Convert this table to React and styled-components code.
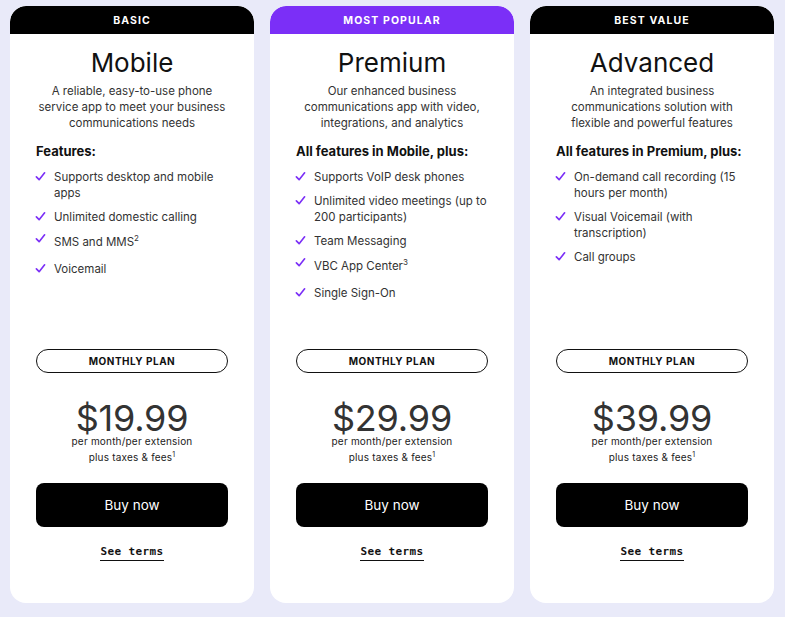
import React from "react";
import styled, { createGlobalStyle } from "styled-components";

const Global = createGlobalStyle`
  html, body { margin: 0; padding: 0; background: #e9eaf9; }
  body { font-family: Inter, "Open Sans", sans-serif; -webkit-font-smoothing: antialiased; }
  * { box-sizing: border-box; }
`;

const Page = styled.div`
  display: grid;
  grid-template-columns: repeat(3, 244px);
  gap: 16px;
  padding: 6px 10px;
  width: 785px;
  height: 617px;
  background: #e9eaf9;
`;

const Card = styled.div`
  display: flex;
  flex-direction: column;
  height: 597px;
  background: #fff;
  border-radius: 16px;
  overflow: hidden;
`;

const Banner = styled.div`
  height: 28px;
  background: ${(p) => (p.$purple ? "#7b2ff7" : "#000")};
  color: #fff;
  display: flex;
  align-items: center;
  justify-content: center;
  font-size: 10.5px;
  font-weight: 700;
  letter-spacing: 1.1px;
  text-transform: uppercase;
  border-radius: 16px 16px 0 0;
`;

const Body = styled.div`
  flex: 1;
  display: flex;
  flex-direction: column;
  padding: 14px 26px 42px;
`;

const Title = styled.h2`
  margin: 0;
  font-size: 26px;
  line-height: 30px;
  font-weight: 400;
  color: #111;
  text-align: center;
`;

const Desc = styled.p`
  margin: 5px -4px 0;
  font-size: 11.5px;
  line-height: 16px;
  color: #333;
  text-align: center;
`;

const FeatHead = styled.h3`
  margin: 11px 0 0;
  font-size: 13px;
  line-height: 18px;
  font-weight: 700;
  color: #111;
`;

const List = styled.ul`
  flex: 1;
  list-style: none;
  margin: 9px 0 0;
  padding: 0;
  display: flex;
  flex-direction: column;
  gap: 8px;
`;

const Item = styled.li`
  display: flex;
  align-items: flex-start;
  gap: 8px;
  font-size: 11.5px;
  line-height: 16px;
  color: #333;
  padding: ${(p) => (p.$sup ? "1px 0 3px" : "0")};
  sup { font-size: 8px; line-height: 0; vertical-align: super; }
`;

const Check = styled.svg`
  flex: none;
  width: 11px;
  height: 11px;
  margin-top: ${(p) => (p.$sup ? "-1px" : "2px")};
  margin-left: -1px;
`;

const Bottom = styled.div`
  display: flex;
  flex-direction: column;
  align-items: center;
`;

const Pill = styled.div`
  width: 192px;
  height: 24px;
  border: 1px solid #111;
  border-radius: 12px;
  display: flex;
  align-items: center;
  justify-content: center;
  font-size: 10px;
  font-weight: 700;
  letter-spacing: 0.5px;
  color: #111;
`;

const Price = styled.div`
  margin-top: 30px;
  font-size: 36px;
  line-height: 30px;
  color: #333;
  letter-spacing: -0.2px;
`;

const Note = styled.div`
  font-size: 10px;
  line-height: 16px;
  color: #222;
  text-align: center;
  letter-spacing: 0.2px;
  sup { font-size: 7px; line-height: 0; }
`;

const Buy = styled.button`
  margin-top: 18px;
  width: 192px;
  height: 44px;
  border: none;
  border-radius: 8px;
  background: #000;
  color: #fff;
  font-family: inherit;
  font-size: 13.5px;
  cursor: pointer;
`;

const Terms = styled.a`
  margin-top: 18px;
  font-family: "DejaVu Sans Mono", "Liberation Mono", monospace;
  font-size: 11px;
  font-weight: 700;
  letter-spacing: 0.4px;
  line-height: 14px;
  color: #111;
  text-decoration: none;
  padding-bottom: 1px;
  border-bottom: 1.5px solid #111;
`;

const plans = [
  {
    label: "Basic",
    title: "Mobile",
    desc: "A reliable, easy-to-use phone service app to meet your business communications needs",
    head: "Features:",
    items: [
      ["Supports desktop and mobile apps"],
      ["Unlimited domestic calling"],
      ["SMS and MMS", "2"],
      ["Voicemail"],
    ],
    price: "$19.99",
  },
  {
    label: "Most Popular",
    purple: true,
    title: "Premium",
    desc: "Our enhanced business communications app with video, integrations, and analytics",
    head: "All features in Mobile, plus:",
    items: [
      ["Supports VoIP desk phones"],
      ["Unlimited video meetings (up to 200 participants)"],
      ["Team Messaging"],
      ["VBC App Center", "3"],
      ["Single Sign-On"],
    ],
    price: "$29.99",
  },
  {
    label: "Best Value",
    title: "Advanced",
    desc: "An integrated business communications solution with flexible and powerful features",
    head: "All features in Premium, plus:",
    items: [
      ["On-demand call recording (15 hours per month)"],
      ["Visual Voicemail (with transcription)"],
      ["Call groups"],
    ],
    price: "$39.99",
  },
];

const CheckIcon = ({ sup }) => (
  <Check viewBox="0 0 12 12" $sup={sup}>
    <path d="M1.5 6.5 L4.5 9.5 L10.5 2" fill="none" stroke="#7b2ff7" strokeWidth="1.8" strokeLinecap="round" strokeLinejoin="round" />
  </Check>
);

export default function App() {
  return (
    <>
      <Global />
      <Page>
        {plans.map((p) => (
          <Card key={p.title}>
            <Banner $purple={p.purple}>{p.label}</Banner>
            <Body>
              <Title>{p.title}</Title>
              <Desc>{p.desc}</Desc>
              <FeatHead>{p.head}</FeatHead>
              <List>
                {p.items.map(([t, s]) => (
                  <Item key={t} $sup={!!s}>
                    <CheckIcon sup={!!s} />
                    <span>
                      {t}
                      {s && <sup>{s}</sup>}
                    </span>
                  </Item>
                ))}
              </List>
              <Bottom>
                <Pill>MONTHLY PLAN</Pill>
                <Price>{p.price}</Price>
                <Note>
                  per month/per extension
                  <br />
                  plus taxes &amp; fees<sup>1</sup>
                </Note>
                <Buy>Buy now</Buy>
                <Terms href="#">See terms</Terms>
              </Bottom>
            </Body>
          </Card>
        ))}
      </Page>
    </>
  );
}
